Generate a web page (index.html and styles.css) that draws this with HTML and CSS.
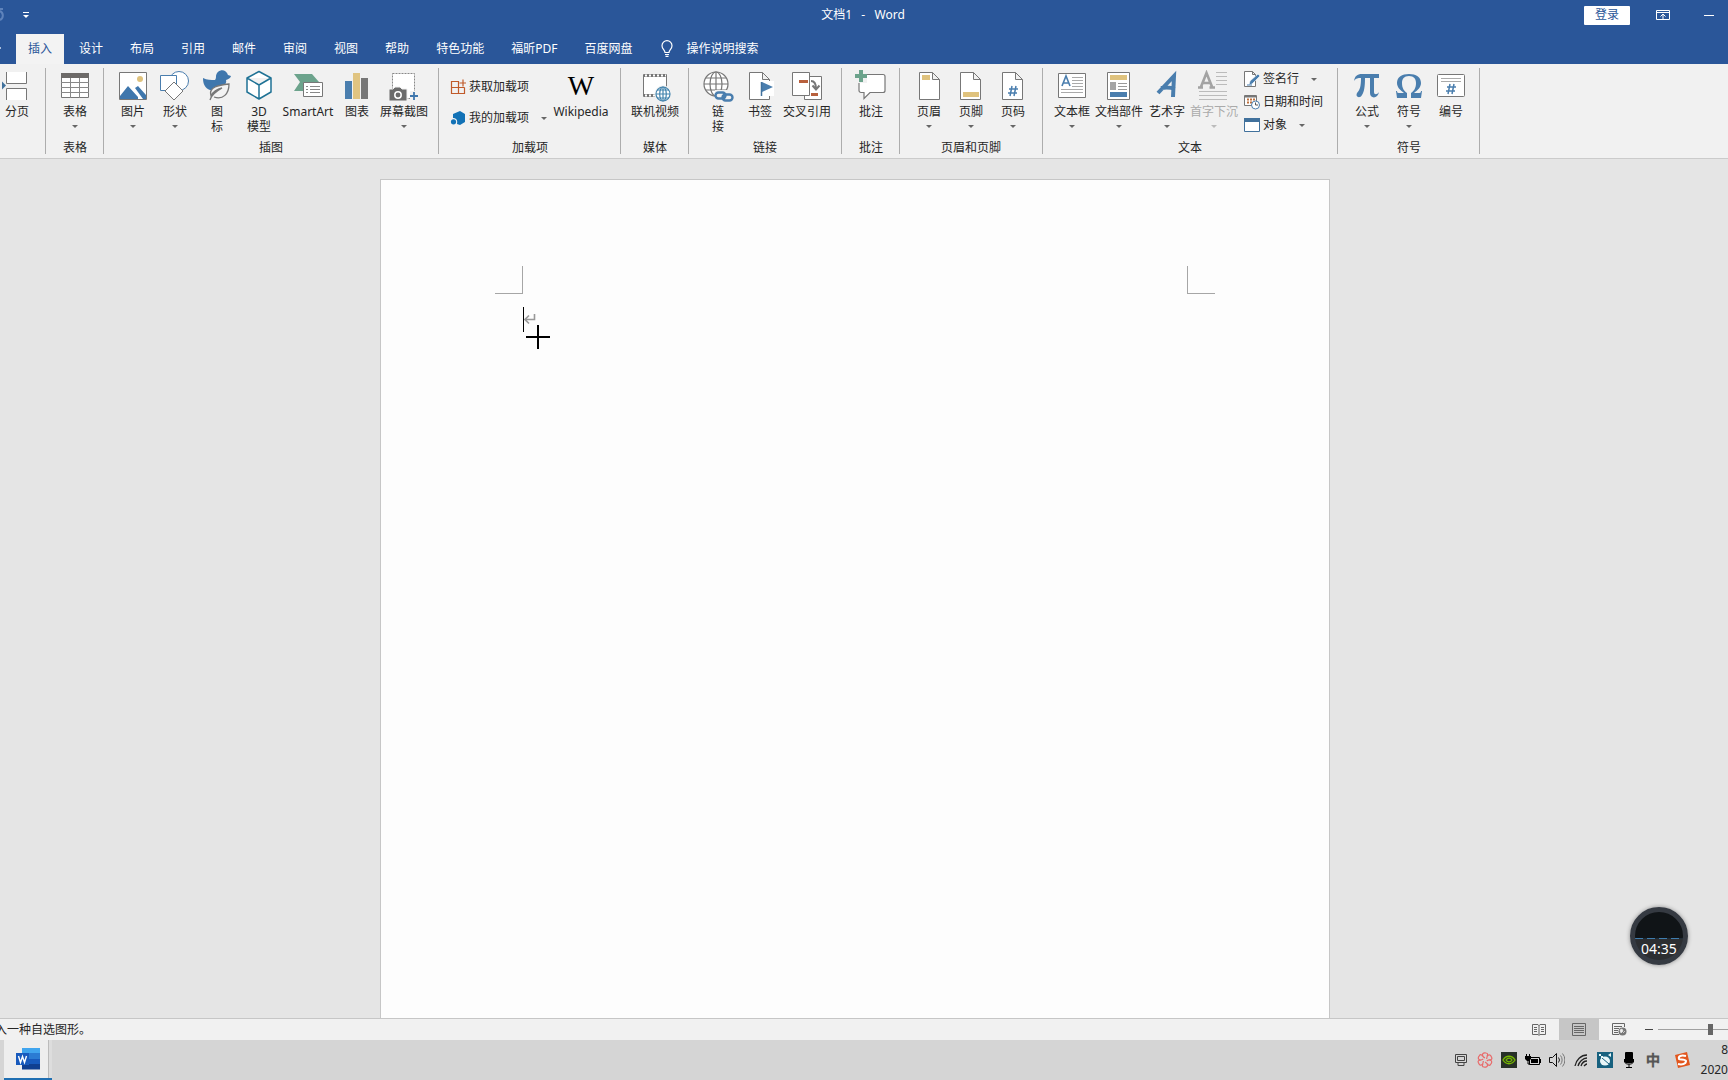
FILE: index.html
```html
<!DOCTYPE html>
<html lang="zh-CN">
<head>
<meta charset="utf-8">
<title>文档1 - Word</title>
<link rel="stylesheet" href="styles.css">
</head>
<body>
<div class="app">
  <header class="titlebar">
    <div class="quick">
      <svg class="redo" width="8" height="16" viewBox="0 0 8 16"><path d="M0 2h3M0 13a5 5 0 0 0 0-9" fill="none" stroke="#5f83bb" stroke-width="2"/></svg>
      <button class="plain" aria-label="自定义快速访问工具栏"><svg width="8" height="8" viewBox="0 0 8 8"><path d="M1 1.500h6" stroke="#fff"/><path d="M1 4h6L4 7z" fill="#fff"/></svg></button>
    </div>
    <h1 class="doc-title">文档1   -   Word</h1>
    <div class="window-tools">
      <button class="login">登录</button>
      <button class="plain" aria-label="功能区显示选项"><svg width="14" height="12" viewBox="0 0 14 12"><path d="M.5 1.500h13v9H.5zM.5 3.500h13M7 10V5M4.500 7.500L7 5l2.500 2.500" fill="none" stroke="#fff"/></svg></button>
      <button class="plain" aria-label="最小化"><svg width="10" height="10" viewBox="0 0 10 10"><path d="M0 5.500h10" stroke="#fff"/></svg></button>
    </div>
  </header>

  <nav class="tabs">
    <button class="tab active">插入</button><button class="tab">设计</button><button class="tab">布局</button><button class="tab">引用</button><button class="tab">邮件</button><button class="tab">审阅</button><button class="tab">视图</button><button class="tab">帮助</button><button class="tab">特色功能</button><button class="tab">福昕PDF</button><button class="tab">百度网盘</button>
    <button class="tell-me"><svg width="12" height="17" viewBox="0 0 12 17"><path d="M4 12.500c0-2.500-3-3.500-3-6.800a5 5 0 0 1 10 0c0 3.300-3 4.300-3 6.800zM4 14.500h4M4.500 16.300h3" fill="none" stroke="#fff" stroke-width="1.200"/></svg>操作说明搜索</button>
  </nav>

  <div class="ribbon">
    <section class="group first">
      <div class="tools">
        <button class="big"><svg class="icon" viewBox="0 0 32 32"><path d="M5.500 2v11.500h20V2M5.500 30V18.500h20V30" fill="#fff" stroke="#777"/><path d="M1 11.500l4 4-4 4z" fill="#41719c"/></svg>分页</button>
      </div>
      <h2></h2>
    </section>

    <section class="group">
      <div class="tools">
        <button class="big"><svg class="icon" viewBox="0 0 32 32"><path d="M2.500 3.500h27v24h-27z" fill="#fff" stroke="#777"/><path d="M2 3h28v5H2z" fill="#6d6a68"/><path d="M2 12.500h28M2 17.500h28M2 22.500h28M11.500 8v20M20.500 8v20" stroke="#888" fill="none"/></svg>表格<i class="caret"></i></button>
      </div>
      <h2>表格</h2>
    </section>

    <section class="group roomy">
      <div class="tools">
        <button class="big"><svg class="icon" viewBox="0 0 32 32"><path d="M2.500 2.500h27v27h-27z" fill="#fff" stroke="#777"/><circle cx="23" cy="9" r="3" fill="#dfc27d"/><path d="M3 26l8-10 10 11v2H3zM18 18l3-2 8 9v4h-3z" fill="#3f77ad"/></svg>图片<i class="caret"></i></button>
        <button class="big"><svg class="icon" viewBox="0 0 32 32"><g fill="#fff" stroke="#4a7eae"><circle cx="20" cy="11" r="9.500"/><path d="M1.500 5.500h16v15h-16z"/><path d="M15 12l9 9-9 9-9-9z" stroke="#777"/></g></svg>形状<i class="caret"></i></button>
        <button class="big"><svg class="icon" viewBox="0 0 32 32"><path d="M2 8c4 2 8 2 12 2 1-1 1-3 1-4 1-7 10-8 12-1l3 1c-1 3-3 3-5 4 1 4-2 5-3 8-4 4-9 4-13 2C4 18 2 14 2 8z" fill="#3f77ad"/><path d="M9 30c1-4 5-8 12-12-5 1-9 4-11 8-3-9 8-11 18-12 0 10-6 16-15 13" fill="#f3f3f3" stroke="#777" stroke-width="1.300"/></svg>图<br>标</button>
        <button class="big"><svg class="icon" viewBox="0 0 32 32"><path d="M16 1.500l12 6.500v14l-12 7-12-7V8zM4 8l12 7 12-7M16 15v14" fill="#fff" stroke="#1f7295" stroke-width="1.500" stroke-linejoin="round"/></svg>3D<br>模型</button>
        <button class="big smart"><svg class="icon" viewBox="0 0 32 32"><path d="M2 4h18l7 8-7 9H2l6-9z" fill="#6ca38c"/><path d="M11.500 12.500h19v14h-19z" fill="#fff" stroke="#777"/><path d="M14 16.500h2M18 16.500h10M14 19.500h2M18 19.500h10M14 22.500h2M18 22.500h10" stroke="#888"/></svg>SmartArt</button>
        <button class="big"><svg class="icon" viewBox="0 0 32 32"><path d="M4 11h7v18H4z" fill="#4a7eae"/><path d="M12 3h7v26h-7z" fill="#e0c481"/><path d="M20 8h7v21h-7z" fill="#777"/></svg>图表</button>
        <button class="big wide"><svg class="icon" viewBox="0 0 32 32"><path d="M4.500 3.500h22v25h-22z" fill="#fff" stroke="#888" stroke-dasharray="2 1"/><path d="M1 19h4l2-2h5l2 2h5v12H1z" fill="#6b6b6b" stroke="#f1f1f1"/><circle cx="10" cy="25" r="3.200" fill="none" stroke="#fff" stroke-width="1.500"/><path d="M22 21h10v10H22z" fill="#f1f1f1"/><path d="M22 26h8M26 22v8" stroke="#3f77ad" stroke-width="1.800"/></svg>屏幕截图<i class="caret"></i></button>
      </div>
      <h2>插图</h2>
    </section>

    <section class="group">
      <div class="tools">
        <div class="stack two">
          <button class="small"><svg width="16" height="16" viewBox="0 0 16 16"><path d="M9 2.500H1.500v12h13V8.500M1.500 8.500h13M8.500 2v12.500M13 .5v7M9.500 4h6.500" fill="none" stroke="#c05a2a" stroke-width="1.200"/></svg>获取加载项</button>
          <button class="small"><svg width="16" height="16" viewBox="0 0 16 16"><path d="M10 1l5 3v8l-5 3-3-1c1-4-1-6-4-6V4z" fill="#1272b6"/><circle cx="3.500" cy="11.800" r="2.600" fill="#1272b6"/></svg>我的加载项<i class="caret far"></i></button>
        </div>
        <button class="big wiki"><span class="icon w-mark">W</span>Wikipedia</button>
      </div>
      <h2>加载项</h2>
    </section>

    <section class="group">
      <div class="tools">
        <button class="big wide"><svg class="icon" viewBox="0 0 32 32"><path d="M4.500 4.500h23v22h-23z" fill="#fff" stroke="#777"/><path d="M5 5.500h22M5 25.500h22" stroke="#777" stroke-width="3"/><path d="M6 5.500h21M6 25.500h21" stroke="#fff" stroke-width="2" stroke-dasharray="2 2"/><circle cx="24" cy="24" r="8.500" fill="#f1f1f1"/><g fill="#fff" stroke="#4384ad" stroke-width="1.200"><circle cx="24" cy="24" r="7"/><ellipse cx="24" cy="24" rx="3.300" ry="7"/><path d="M17 24h14M18 20h12M18 28h12M24 17v14" fill="none"/></g></svg>联机视频</button>
      </div>
      <h2>媒体</h2>
    </section>

    <section class="group roomy">
      <div class="tools">
        <button class="big"><svg class="icon" viewBox="0 0 32 32"><g fill="#fff" stroke="#777" stroke-width="1.200"><circle cx="14" cy="14" r="12"/><ellipse cx="14" cy="14" rx="6" ry="12"/><path d="M2 14h24M4 8h20M4 20h20M14 2v24" fill="none"/></g><path d="M13 20h19v12H13z" fill="#f1f1f1"/><g fill="none" stroke="#4a7eae" stroke-width="2.400"><rect x="13.500" y="22.500" width="10" height="6" rx="3"/><rect x="20.500" y="24.500" width="10" height="6" rx="3"/></g></svg>链<br>接</button>
        <button class="big"><svg class="icon" viewBox="0 0 32 32"><path d="M5.500 2.500h13l7 7v20h-20zM18.500 2.500v7h7" fill="#fff" stroke="#777"/><path d="M16 11h14v15H16z" fill="#fff"/><path d="M18 12l11 5-11 5z" fill="#4a7eae"/><path d="M17.500 12v14" stroke="#41719c" stroke-width="1.500"/></svg>书签</button>
        <button class="big wide"><svg class="icon" viewBox="0 0 32 32"><path d="M13.500 6.500h17v23h-17z" fill="#fff" stroke="#777"/><path d="M1.500 2.500h17v23h-17z" fill="#fff" stroke="#777"/><path d="M8 10h9v3H8zM20 23h7v3h-7z" fill="#b8603d"/><path d="M20 11c4 0 5 3 5 8M21.500 15.500l3.500 4 3.500-4" fill="none" stroke="#777" stroke-width="2"/></svg>交叉引用</button>
      </div>
      <h2>链接</h2>
    </section>

    <section class="group">
      <div class="tools">
        <button class="big"><svg class="icon" viewBox="0 0 32 32"><path d="M6 4.500h22a2 2 0 0 1 2 2v14a2 2 0 0 1-2 2H15l-6 6v-6H6a2 2 0 0 1-2-2v-14z" fill="#fff" stroke="#777" stroke-width="1.200"/><path d="M0 0h12v13H0z" fill="#f1f1f1"/><path d="M4 0h4v4h4v4H8v4H4V8H0V4h4z" fill="#6ca38c"/></svg>批注</button>
      </div>
      <h2>批注</h2>
    </section>

    <section class="group roomy">
      <div class="tools">
        <button class="big"><svg class="icon" viewBox="0 0 32 32"><path d="M6.500 2.500h13l7 7v20h-20zM19.500 2.500v7h7" fill="#fff" stroke="#777"/><path d="M9 5h8v5H9z" fill="#dfc27d"/></svg>页眉<i class="caret"></i></button>
        <button class="big"><svg class="icon" viewBox="0 0 32 32"><path d="M5.500 2.500h13l7 7v20h-20zM18.500 2.500v7h7" fill="#fff" stroke="#777"/><path d="M8 22h16v5H8z" fill="#dfc27d"/></svg>页脚<i class="caret"></i></button>
        <button class="big"><svg class="icon" viewBox="0 0 32 32"><path d="M5.500 2.500h13l7 7v20h-20zM18.500 2.500v7h7" fill="#fff" stroke="#777"/><path d="M15 16l-2 10M19 16l-2 10M12 19h9M11 23h9" fill="none" stroke="#4a7eae" stroke-width="1.500"/></svg>页码<i class="caret"></i></button>
      </div>
      <h2>页眉和页脚</h2>
    </section>

    <section class="group roomy">
      <div class="tools">
        <button class="big"><svg class="icon" viewBox="0 0 32 32"><path d="M2.500 3.500h27v24h-27z" fill="#fff" stroke="#777"/><path d="M6 16l4-10 4 10M7.500 13h5" fill="none" stroke="#4a7eae" stroke-width="1.600"/><path d="M16 7.500h11M16 10.500h11M16 13.500h11M16 16.500h11M5 19.500h22M5 22.500h22" stroke="#aaa"/></svg>文本框<i class="caret"></i></button>
        <button class="big wide"><svg class="icon" viewBox="0 0 32 32"><path d="M4.500 2.500h22v27h-22z" fill="#fff" stroke="#777"/><path d="M7 5h17v5H7z" fill="#dfc27d"/><path d="M7 12h6v8H7z" fill="#a5a5a5"/><path d="M15 13.500h9M15 16.500h9M15 19.500h9" stroke="#999"/><path d="M7 22h17v5H7z" fill="#4a7eae"/></svg>文档部件<i class="caret"></i></button>
        <button class="big art"><svg class="icon" viewBox="0 0 32 32"><path d="M7 23L23 6l-1 21M10 18c5-1 9-1 14 1" fill="none" stroke="#4a7eae" stroke-width="4"/></svg>艺术字<i class="caret"></i></button>
        <button class="big drop" disabled><svg class="icon" viewBox="0 0 32 32"><path d="M2.500 18L8.500 3l6 15M4.500 13h8M0 17.500h5M11.500 17.500h5.500" fill="none" stroke="#a3a3a3" stroke-width="2.600"/><path d="M18 2.500h11M18 6.500h11M18 10.500h11M18 14.500h11M1 21.500h28M1 25.500h28M1 29.500h28" stroke="#bbb"/></svg>首字下沉<i class="caret"></i></button>
        <div class="stack three">
          <button class="small"><svg width="16" height="16" viewBox="0 0 16 16"><path d="M.5.500h8l3 3v12H.5zM8.500.500v3h3" fill="#fff" stroke="#777"/><path d="M5 14l1-4 8-7 2 2-8 8z" fill="#4a7eae" stroke="#fff" stroke-width=".6"/><path d="M3 14h5" stroke="#4a7eae"/></svg>签名行<i class="caret far"></i></button>
          <button class="small"><svg width="16" height="16" viewBox="0 0 16 16"><path d="M.5 1.500h12v10H.5z" fill="#fff" stroke="#777"/><path d="M1 2.500h11" stroke="#777" stroke-width="2"/><path d="M3 5.500h2M6 5.500h2M9 5.500h2M3 8.500h2M6 8.500h2" stroke="#c0703d" stroke-width="2"/><circle cx="11.500" cy="11" r="4" fill="#fff" stroke="#4a7eae"/><path d="M11.500 8.500V11H14" fill="none" stroke="#555"/></svg>日期和时间</button>
          <button class="small"><svg width="16" height="16" viewBox="0 0 16 16"><path d="M.5 1.500h15v13H.5z" fill="#fff" stroke="#41719c"/><path d="M0 1h16v4H0z" fill="#41719c"/></svg>对象<i class="caret far"></i></button>
        </div>
      </div>
      <h2>文本</h2>
    </section>

    <section class="group">
      <div class="tools">
        <button class="big"><svg class="icon" viewBox="0 0 32 32"><path d="M3 11C4 6 6 4 11 4h17v4h-5v14c0 3 3 3 5 0-1 7-9 7-9 1V8h-5c0 9-1 14-3 17-2 4-7 2-5-2 3-3 4-7 4-15-3 0-5 0-7 3z" fill="#4a7eae"/></svg>公式<i class="caret"></i></button>
        <button class="big"><svg class="icon" viewBox="0 0 32 32"><path d="M3 21h1c0 2 1 2 3 2h4c-4-3-7-6-7-10C4 7 9 4 16 4s12 3 12 9c0 4-3 7-7 10h4c2 0 3 0 3-2h1l-1 7H18v-5c3-2 5-5 5-10 0-4-2-7-7-7s-7 3-7 7c0 5 2 8 5 10v5H4z" fill="#4a7eae"/></svg>符号<i class="caret"></i></button>
        <button class="big"><svg class="icon" viewBox="0 0 32 32"><rect x="2.500" y="4.500" width="27" height="22" rx="1" fill="#fff" stroke="#777"/><path d="M6 8.500h20M6 11.500h20" stroke="#aaa"/><path d="M15 14l-2 10M19 14l-2 10M12 17h9M11 21h9" fill="none" stroke="#4a7eae" stroke-width="1.500"/></svg>编号</button>
      </div>
      <h2>符号</h2>
    </section>
  </div>

  <main class="workspace">
    <article class="page">
      <div class="margins"><span class="corner left"></span><span class="corner right"></span></div>
      <p class="line"><svg width="12" height="12" viewBox="0 0 12 12"><path d="M10.500 0v5.500H1.500M5 1.500l-4 4 4 4" fill="none" stroke="#999" stroke-width="1.600"/></svg></p>
      <svg class="pointer" viewBox="0 0 24 24"><path d="M0 12h24M12 0v24" stroke="#000" stroke-width="2"/></svg>
    </article>
    <div class="timer"><span>04:35</span></div>
  </main>

  <footer class="status">
    <span class="hint">入一种自选图形。</span>
    <div class="views">
      <button class="view" aria-label="阅读视图"><svg width="14" height="13" viewBox="0 0 14 13"><path d="M.5 1.500H6l1 1 1-1h5.500v10H8l-1 1-1-1H.5zM7 2v10M2 4.500h3M2 6.500h3M2 8.500h3M9 4.500h3M9 6.500h3M9 8.500h3" fill="none" stroke="#666"/></svg></button>
      <button class="view on" aria-label="页面视图"><svg width="14" height="13" viewBox="0 0 14 13"><path d="M.5.500h13v12H.5zM2 3.500h10M2 5.500h10M2 7.500h10M2 9.500h10" fill="none" stroke="#666"/></svg></button>
      <button class="view" aria-label="Web 版式视图"><svg width="15" height="13" viewBox="0 0 15 13"><path d="M7 11.500H.5V.5h12V4M2 3.500h8M2 5.500h5M2 7.500h4M2 9.500h4" fill="none" stroke="#666"/><circle cx="10.500" cy="8.500" r="4" fill="#777"/><path d="M8 7l2-1 1 2-2 2zM11 10l2-2" stroke="#eee" fill="#eee" stroke-width=".7"/></svg></button>
      <button class="minus" aria-label="缩小"><svg width="8" height="8" viewBox="0 0 8 8"><path d="M0 3.500h8" stroke="#444"/></svg></button>
      <input class="zoom" type="range" min="0" max="100" value="50" aria-label="显示比例">
    </div>
  </footer>

  <div class="taskbar">
    <button class="task" aria-label="Word"><svg width="24" height="22" viewBox="0 0 24 22"><path d="M6 0h18v6H6z" fill="#41a5ee"/><path d="M6 5h18v6H6z" fill="#2b7cd3"/><path d="M6 11h18v5H6z" fill="#185abd"/><path d="M6 16h18v5.500H6z" fill="#103f91"/><path d="M0 5h13v12H0z" fill="#185abd"/><path d="M2.500 8l2 6.500 2-6 2 6 2-6.500" fill="none" stroke="#fff" stroke-width="1.400"/></svg></button>
    <div class="tray">
      <svg viewBox="0 0 16 16"><path d="M2.500 2.500h11v8h-11zM4.500 4.500h7v4h-7zM5 11v2.500h6V11" fill="none" stroke="#444"/></svg>
      <svg viewBox="0 0 16 16"><g fill="none" stroke="#e86a6a" stroke-width="1.200"><path id="petal" d="M8 6C4 4 5 0 9 1M9 1c2 0 2 2 1 3"/><use href="#petal" transform="rotate(60 8 8)"/><use href="#petal" transform="rotate(120 8 8)"/><use href="#petal" transform="rotate(180 8 8)"/><use href="#petal" transform="rotate(240 8 8)"/><use href="#petal" transform="rotate(300 8 8)"/></g></svg>
      <svg viewBox="0 0 16 16"><path d="M0 0h16v16H0z" fill="#273027"/><path d="M2 8c3-5 9-5 12 0-3 5-9 5-12 0zm3 0c2-3 5-2 6 0-2 3-5 2-6 0z" fill="none" stroke="#76b900" stroke-width="1.300"/></svg>
      <svg viewBox="0 0 16 16"><path d="M4.500 5.500h10v7h-10z" fill="none" stroke="#000"/><path d="M6 7h7v4H6zM15 7h1v4h-1zM0 4h6v3L4 9H2L0 7z"/><path d="M1.500 2v3M4.500 2v3M3 8v4h2" fill="none" stroke="#000"/></svg>
      <svg viewBox="0 0 16 16"><path d="M.5 5.500h3l4-4v13l-4-4h-3z" fill="none" stroke="#111"/><path d="M9.500 5.500a4 4 0 0 1 0 5" fill="none" stroke="#222"/><path d="M11.500 3.500a7 7 0 0 1 0 9M13.500 1.500a10 10 0 0 1 0 13" fill="none" stroke="#777"/></svg>
      <svg viewBox="0 0 16 16"><g fill="none" stroke="#222" stroke-width="1.300"><path d="M2 14C3 8 8 3 14 3M5 14c1-4 5-8 9-8M8 14c1-3 3-5 6-5M11 14c1-1 2-2 3-2"/></g></svg>
      <svg viewBox="0 0 16 16"><path d="M0 0h16v16H0z" fill="#17617f"/><ellipse cx="8" cy="9" rx="5" ry="4.500" fill="#e8f6f8"/><path d="M5 6l7 6" stroke="#17617f"/><path d="M2 2h2v2H2zM4 4h2v2H4zM11 3l3-2v4z" fill="#e8f6f8"/></svg>
      <svg viewBox="0 0 16 16"><rect x="4" width="8" height="11" rx="1"/><path d="M3.500 7v3l2 2h5l2-2V7M8 12v3M5 15.500h6" fill="none" stroke="#000"/></svg>
      <span class="ime">中</span>
      <svg class="sogou" viewBox="0 0 16 16"><path d="M1 3l12-3 3 13-12 3z" fill="#e2571f"/><path d="M12 4C7 3 4 4 5 7c1 1 6 0 7 2 0 3-4 4-8 3" fill="none" stroke="#fff" stroke-width="2"/></svg>
      <time class="clock"><span>8</span><span>2020</span></time>
    </div>
  </div>
</div>
</body>
</html>
```
FILE: styles.css
```css
* { box-sizing: border-box; }
body {
  margin: 0;
  font: 12px/16px "Noto Sans", "Noto Sans CJK SC", sans-serif;
  color: #262626;
}
button {
  border: 0;
  padding: 0;
  margin: 0;
  background: none;
  font: inherit;
  color: inherit;
}
svg { display: block; flex: none; }
.app {
  height: 100vh;
  display: flex;
  flex-direction: column;
  overflow: hidden;
}

/* title bar */
.titlebar {
  flex: none;
  display: grid;
  grid-template-columns: 1fr auto 1fr;
  align-items: center;
  height: 30px;
  background: #2a5699;
  color: #fff;
}
.quick { display: flex; align-items: center; gap: 14px; }
.doc-title {
  margin: 0;
  padding-right: 2px;
  font-size: 12px;
  font-weight: 400;
  white-space: pre;
}
.window-tools {
  display: flex;
  align-items: center;
  justify-content: flex-end;
  gap: 34px;
  padding-right: 14px;
}
.login {
  width: 46px;
  height: 19px;
  margin-right: -8px;
  background: #fff;
  color: #2a5699;
  border-radius: 1px;
  line-height: 18px;
}

/* ribbon tabs */
.tabs {
  flex: none;
  display: flex;
  align-items: flex-end;
  gap: 3px;
  height: 34px;
  padding-left: 16px;
  background: linear-gradient(#a9bedd, #a9bedd) 0 17px / 1px 2px no-repeat #2a5699;
  color: #fff;
}
.tab {
  height: 30px;
  padding: 0 12px 1px;
}
.tab.active {
  background: #f3f3f3;
  color: #2a5699;
}
.tell-me {
  display: flex;
  align-items: center;
  gap: 13px;
  height: 30px;
  padding: 0 14px 1px;
}

/* ribbon */
.ribbon {
  flex: none;
  display: flex;
  height: 95px;
  padding: 4px 0;
  background: #f1f1f1;
  border-bottom: 1px solid #cbcbcb;
}
.group {
  display: flex;
  flex-direction: column;
  justify-content: space-between;
  padding: 0 7px 0 8px;
  border-right: 1px solid #adadad;
}
.group.roomy { padding-right: 8px; }
.group.first { padding-left: 0; padding-right: 11px; }
.group h2 {
  margin: 0;
  font-size: 12px;
  font-weight: 400;
  line-height: 12px;
  text-align: center;
}
.tools { display: flex; padding-top: 2px; }
.big {
  display: block;
  width: 42px;
  text-align: center;
  line-height: 15px;
  white-space: nowrap;
  align-self: flex-start;
}
.first .big { width: 34px; }
.big.wide { width: 52px; }
.big.smart { width: 56px; }
.big.wiki { width: 64px; }
.big.art { width: 44px; }
.big.drop { width: 50px; color: #aaa; }
.icon {
  display: block;
  width: 32px;
  height: 32px;
  margin: 0 auto 2px;
}
.w-mark {
  font: 28px/32px "Liberation Serif", serif;
  color: #000;
}
.caret {
  display: block;
  width: 0;
  margin: 6px auto 0;
  border: 3px solid transparent;
  border-top-color: #666;
  border-bottom: 0;
}
.drop .caret { border-top-color: #bbb; }
.stack { display: flex; flex-direction: column; }
.stack.two { width: 102px; padding: 9px 0 0 3px; gap: 15px; }
.stack.three { width: 90px; padding: 1px 0 0 5px; gap: 7px; }
.small {
  display: flex;
  align-items: center;
  gap: 3px;
  height: 16px;
  white-space: nowrap;
}
.caret.far { margin: 0 0 0 9px; }

/* document area */
.workspace {
  position: relative;
  flex: 1;
  min-height: 0;
  display: flex;
  justify-content: center;
  padding: 20px 18px 0 0;
  background: #e5e5e5;
}
.page {
  position: relative;
  width: 55.5%;
  padding: 86px 114px 0;
  background: #fdfdfd;
  border: 1px solid #c6c6c6;
  border-bottom: 0;
}
.margins { display: flex; justify-content: space-between; }
.corner {
  width: 28px;
  height: 28px;
  border-bottom: 1px solid #a6a6a6;
}
.corner.left { border-right: 1px solid #a6a6a6; }
.corner.right { border-left: 1px solid #a6a6a6; }
.line {
  display: flex;
  align-items: center;
  height: 25px;
  margin: 13px 0 0 28px;
  border-left: 1px solid #000;
}
.pointer {
  position: absolute;
  left: 145px;
  top: 145px;
  width: 24px;
  height: 24px;
}
.timer {
  position: absolute;
  right: 40px;
  bottom: 53px;
  width: 58px;
  height: 58px;
  border: 5px solid #353a42;
  border-radius: 50%;
  background: repeating-linear-gradient(90deg, #3f7dae 0 8px, #1d2b36 8px 12px) 0 26px / 100% 1px no-repeat, linear-gradient(#101417 26px, #2c2e31 26px);
  box-shadow: 0 0 4px #888;
  color: #fff;
  font-size: 14px;
  line-height: 16px;
  text-align: center;
}
.timer span { display: block; padding-top: 29px; }

/* status bar */
.status {
  flex: none;
  display: flex;
  justify-content: space-between;
  align-items: center;
  height: 22px;
  background: #f1f1f1;
  border-top: 1px solid #c6c6c6;
}
.hint { margin-left: -5px; }
.views { display: flex; align-items: center; }
.view {
  width: 40px;
  height: 21px;
  display: grid;
  place-items: center;
}
.view.on { background: #c6c6c6; }
.minus { margin: 0 5px 0 6px; }
.zoom {
  appearance: none;
  width: 105px;
  height: 12px;
  margin: 0 -35px 0 0;
  background: linear-gradient(#a0a0a0, #a0a0a0) 0 5px / 100% 1px no-repeat;
}
.zoom::-webkit-slider-thumb {
  appearance: none;
  width: 5px;
  height: 11px;
  background: #666;
}

/* taskbar */
.taskbar {
  flex: none;
  display: flex;
  justify-content: space-between;
  height: 40px;
  background: #d5d5d5;
}
.task {
  display: grid;
  place-items: center;
  width: 48px;
  margin-left: 4px;
  background: linear-gradient(90deg, #eee 44px, #bbb 44px 45px, #ddd 45px);
  border-bottom: 2px solid #1f6fb2;
}
.tray {
  display: flex;
  align-items: center;
  gap: 8px;
}
.tray > svg { width: 16px; height: 16px; }
.tray > .sogou { margin-left: 5px; }
.ime {
  width: 16px;
  font-size: 14px;
  text-align: center;
  color: #eee;
  -webkit-text-stroke: 1px #555;
  paint-order: normal;
}
.clock {
  display: flex;
  flex-direction: column;
  align-items: flex-end;
  width: 30px;
  line-height: 20px;
}
```
